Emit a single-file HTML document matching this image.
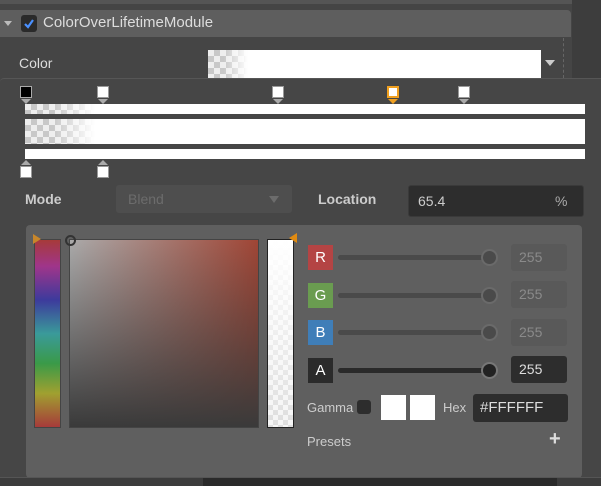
<!DOCTYPE html>
<html><head><style>
*{margin:0;padding:0;box-sizing:border-box}
body{width:601px;height:486px;background:#454545;position:relative;overflow:hidden;font-family:"Liberation Sans",sans-serif}
.a{position:absolute}
.chk{background-image:linear-gradient(45deg,#c8c8c8 25%,transparent 25%,transparent 75%,#c8c8c8 75%),linear-gradient(45deg,#c8c8c8 25%,transparent 25%,transparent 75%,#c8c8c8 75%);background-size:12px 12px;background-position:0 0,6px 6px;background-color:#eee}
.sq{width:12px;height:12px;background:#fff;border:1px solid #999}
.tri{width:0;height:0;border-left:5px solid transparent;border-right:5px solid transparent;border-top:5px solid #aaa}
.trd{width:0;height:0;border-left:5px solid transparent;border-right:5px solid transparent;border-bottom:5px solid #aaa}
.lab{color:#ddd;font-size:13px}
.box{width:25px;height:25px;color:#fff;font-size:15px;text-align:center;line-height:25px}
.trk{height:5px;background:#4a4a4a;border-radius:3px}
.thumb{width:17px;height:17px;border-radius:50%;background:#4a4a4a;border:2px solid #6a6a6a}
.inp{width:56px;height:27px;background:#595959;border-radius:3px;color:#8a8a8a;font-size:14px;line-height:27px;padding-left:8px}
</style></head><body>
<div class="a" style="left:0;top:0;width:572px;height:4px;background:#555"></div>
<div class="a" style="left:572px;top:0;width:29px;height:78px;background:#3d3d3d"></div>
<div class="a" style="left:0;top:10px;width:571px;height:27px;background:#5e5e5e;border-radius:0 4px 0 0"></div>
<div class="a" style="left:4px;top:21px;border-left:4px solid transparent;border-right:4px solid transparent;border-top:5px solid #bbb"></div>
<div class="a" style="left:21px;top:15px;width:16px;height:17px;background:#2a2a2a;border-radius:3px"></div>
<svg class="a" style="left:21px;top:15px" width="16" height="17"><path d="M4 9 L7 12 L12 5" stroke="#4a90ff" stroke-width="2.2" fill="none"/></svg>
<div class="a" style="left:43px;top:14px;color:#ddd;font-size:15px">ColorOverLifetimeModule</div>
<div class="a" style="left:563px;top:38px;height:40px;border-left:1px dashed #666"></div>
<div class="a lab" style="left:19px;top:55px;font-size:14px">Color</div>
<div class="a" style="left:208px;top:50px;width:333px;height:28px;background:#fff"><div class="chk" style="width:40px;height:28px;-webkit-mask-image:linear-gradient(90deg,#000 40%,transparent);mask-image:linear-gradient(90deg,#000 40%,transparent)"></div></div>
<div class="a" style="left:545px;top:60px;border-left:5px solid transparent;border-right:5px solid transparent;border-top:6px solid #ccc"></div>

<div class="a" style="left:0;top:78px;width:601px;height:400px;background:#464646;border-top:1px solid #565656;border-radius:4px 0 0 0"></div>
<div class="a sq" style="left:20px;top:86px;background:#000;border-color:#aaa"></div><div class="a tri" style="left:21px;top:99px"></div>
<div class="a sq" style="left:97px;top:86px"></div><div class="a tri" style="left:98px;top:99px"></div>
<div class="a sq" style="left:272px;top:86px"></div><div class="a tri" style="left:273px;top:99px"></div>
<div class="a sq" style="left:387px;top:86px;border:2px solid #f0a020"></div><div class="a tri" style="left:388px;top:99px;border-top-color:#f0a020"></div>
<div class="a sq" style="left:458px;top:86px"></div><div class="a tri" style="left:459px;top:99px"></div>
<div class="a" style="left:25px;top:104px;width:560px;height:10px;background:#fff"><div class="chk" style="width:70px;height:10px;-webkit-mask-image:linear-gradient(90deg,#000 40%,transparent);mask-image:linear-gradient(90deg,#000 40%,transparent)"></div></div>
<div class="a" style="left:25px;top:119px;width:560px;height:25px;background:#fff"><div class="chk" style="width:70px;height:25px;-webkit-mask-image:linear-gradient(90deg,#000 40%,transparent);mask-image:linear-gradient(90deg,#000 40%,transparent)"></div></div>
<div class="a" style="left:25px;top:149px;width:560px;height:10px;background:#fff"></div>
<div class="a trd" style="left:21px;top:160px"></div><div class="a sq" style="left:20px;top:166px"></div>
<div class="a trd" style="left:98px;top:160px"></div><div class="a sq" style="left:97px;top:166px"></div>

<div class="a" style="left:25px;top:191px;color:#ccc;font-size:14px;font-weight:bold">Mode</div>
<div class="a" style="left:116px;top:185px;width:176px;height:28px;background:#4e4e4e;border-radius:3px;color:#6c6c6c;font-size:14px;line-height:28px;padding-left:12px">Blend</div>
<div class="a" style="left:269px;top:196px;border-left:5px solid transparent;border-right:5px solid transparent;border-top:7px solid #6c6c6c"></div>
<div class="a" style="left:318px;top:191px;color:#ccc;font-size:14px;font-weight:bold">Location</div>
<div class="a" style="left:408px;top:185px;width:176px;height:32px;background:#2d2d2d;border-radius:3px;border:1px solid #3a3a3a"></div>
<div class="a" style="left:418px;top:193px;color:#ccc;font-size:14px">65.4</div>
<div class="a" style="left:555px;top:193px;color:#aaa;font-size:14px">%</div>

<div class="a" style="left:26px;top:225px;width:556px;height:253px;background:#5f5f5f;border-radius:4px"></div>
<div class="a" style="left:34px;top:239px;width:27px;height:189px;border:1px solid #444;background:linear-gradient(#a63a3a,#a0358a 14%,#3d3a9c 32%,#3a9a9a 50%,#3a9a48 66%,#a0a030 82%,#a63a3a)"></div>
<div class="a" style="left:33px;top:234px;border-top:5px solid transparent;border-bottom:5px solid transparent;border-left:8px solid #c8862a"></div>
<div class="a" style="left:69px;top:239px;width:190px;height:189px;border:1px solid #444;background:linear-gradient(rgba(0,0,0,0),#3a3a3a),linear-gradient(90deg,#aaa,#a04535)"></div>
<div class="a" style="left:65px;top:235px;width:11px;height:11px;border-radius:50%;border:2px solid #333"></div>
<div class="a chk" style="left:267px;top:239px;width:27px;height:189px;border:1px solid #222;background-size:10px 10px;background-position:0 0,5px 5px"><div style="width:100%;height:100%;background:linear-gradient(#fff,rgba(255,255,255,0.4))"></div></div>
<div class="a" style="left:289px;top:233px;border-top:5px solid transparent;border-bottom:5px solid transparent;border-right:8px solid #e08a10"></div>

<div class="a box" style="left:308px;top:245px;background:#b44444">R</div>
<div class="a box" style="left:308px;top:283px;background:#6a9c50">G</div>
<div class="a box" style="left:308px;top:320px;background:#3f7eb8">B</div>
<div class="a box" style="left:308px;top:358px;background:#2b2b2b">A</div>
<div class="a trk" style="left:338px;top:255px;width:155px"></div><div class="a thumb" style="left:481px;top:249px"></div>
<div class="a trk" style="left:338px;top:293px;width:155px"></div><div class="a thumb" style="left:481px;top:287px"></div>
<div class="a trk" style="left:338px;top:330px;width:155px"></div><div class="a thumb" style="left:481px;top:324px"></div>
<div class="a trk" style="left:338px;top:368px;width:155px;background:#2a2a2a"></div><div class="a thumb" style="left:481px;top:362px;background:#222;border-color:#777"></div>
<div class="a inp" style="left:511px;top:244px">255</div>
<div class="a inp" style="left:511px;top:281px">255</div>
<div class="a inp" style="left:511px;top:319px">255</div>
<div class="a inp" style="left:511px;top:356px;background:#2d2d2d;color:#ddd">255</div>

<div class="a" style="left:307px;top:400px;color:#ccc;font-size:13px">Gamma</div>
<div class="a" style="left:357px;top:400px;width:14px;height:14px;background:#2d2d2d;border-radius:3px"></div>
<div class="a" style="left:381px;top:395px;width:25px;height:25px;background:#fff"></div>
<div class="a" style="left:410px;top:395px;width:25px;height:25px;background:#fff"></div>
<div class="a" style="left:443px;top:400px;color:#ccc;font-size:13px">Hex</div>
<div class="a" style="left:473px;top:394px;width:95px;height:28px;background:#2d2d2d;border-radius:3px;color:#ddd;font-size:15px;line-height:28px;padding-left:7px">#FFFFFF</div>
<div class="a" style="left:307px;top:434px;color:#ccc;font-size:13px">Presets</div>
<div class="a" style="left:549px;top:428px;color:#ddd;font-size:20px;font-weight:bold">+</div>

<div class="a" style="left:0;top:477px;width:601px;height:9px;background:#3c3c3c;border-top:1px solid #555"></div>
<div class="a" style="left:203px;top:478px;width:354px;height:8px;background:#2a2a2a"></div>
</body></html>
